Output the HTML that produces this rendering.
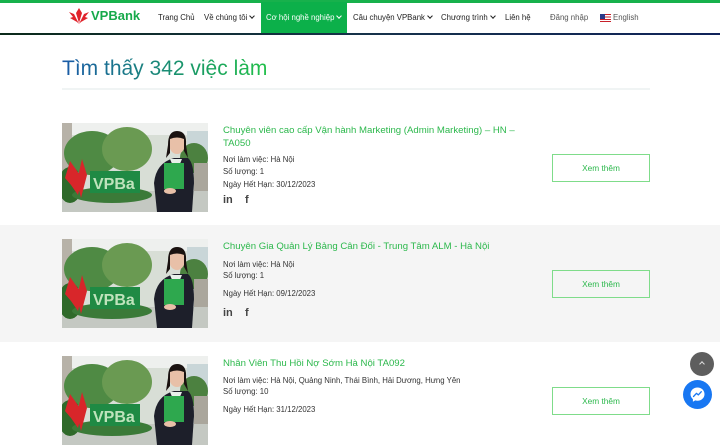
<!DOCTYPE html>
<html><head><meta charset="utf-8"><style>
*{margin:0;padding:0;box-sizing:border-box}
body{width:720px;height:420px;overflow:hidden;background:#fff;font-family:"Liberation Sans",sans-serif;position:relative}
.a{position:absolute;white-space:nowrap}
.nav{font-size:7.8px;color:#222;top:13px}
.chev{display:inline-block;width:4px;height:4px;border-right:1.4px solid currentColor;border-bottom:1.4px solid currentColor;transform:rotate(45deg);margin-left:3px;position:relative;top:-2px}
.t{color:#2cb84c;font-size:9.6px}
.d{color:#333;font-size:7.8px}
.btn{position:absolute;left:552px;width:98px;height:28px;border:1px solid #7fdc8a;color:#2cb84c;font-size:8.3px;text-align:center;line-height:26px}
.ic{font-weight:bold;color:#444;font-size:11px}
</style></head><body>
<div class="a" style="left:0;top:0;width:720px;height:3px;background:#17b14c"></div>
<div class="a" style="left:0;top:33px;width:720px;height:2px;background:linear-gradient(90deg,#0b2a1a,#16324a 50%,#10235a)"></div>
<div class="a" style="left:261px;top:2px;width:86px;height:31px;background:#0cb04a"></div>
<svg class="a" style="left:68px;top:8px" width="22" height="16" viewBox="0 0 22 16"><path d="M11 16 L6 6 L1 4 L5 9 L2 10 L9 14Z M11 16 L16 6 L21 4 L17 9 L20 10 L13 14Z M11 15 L8 5 L11 0 L14 5Z" fill="#e0222a"/></svg>
<div class="a" style="left:91px;top:8px;font-size:13px;font-weight:bold;color:#16a94a">VPBank</div>
<div class="a nav" style="left:158px">Trang Chủ</div>
<div class="a nav" style="left:204px">Về chúng tôi<span class="chev"></span></div>
<div class="a nav" style="left:266px;color:#fff">Cơ hội nghề nghiệp<span class="chev"></span></div>
<div class="a nav" style="left:353px">Câu chuyện VPBank<span class="chev"></span></div>
<div class="a nav" style="left:441px">Chương trình<span class="chev"></span></div>
<div class="a nav" style="left:505px">Liên hệ</div>
<div class="a nav" style="left:550px;color:#555">Đăng nhập</div>
<div class="a" style="left:600px;top:14px;width:11px;height:8px;background:repeating-linear-gradient(#c8202a 0 1.2px,#fff 1.2px 2.4px)"><div style="width:5px;height:4.5px;background:#2a3a8a"></div></div>
<div class="a nav" style="left:613px;color:#555">English</div>

<div class="a" style="left:62px;top:57px;font-size:21px;background:linear-gradient(90deg,#1a5aa8,#1aa060 70%,#22c04a);-webkit-background-clip:text;color:transparent">Tìm thấy 342 việc làm</div>
<div class="a" style="left:62px;top:88px;width:588px;height:2px;background:#f0f4f4"></div>

<div class="a" style="left:0;top:225px;width:720px;height:117px;background:#f5f5f5"></div>

<svg width="0" height="0" style="position:absolute"><defs><g id="img">
<rect width="146" height="89" fill="#d8ded6"/>
<rect x="0" y="0" width="146" height="12" fill="#eef0ee"/>
<rect x="0" y="0" width="10" height="60" fill="#b7b2a8"/>
<rect x="125" y="8" width="21" height="30" fill="#c9d6d8"/>
<ellipse cx="30" cy="30" rx="28" ry="22" fill="#4f8a44"/>
<ellipse cx="65" cy="26" rx="25" ry="22" fill="#6a9a52"/>
<ellipse cx="132" cy="35" rx="14" ry="15" fill="#4c8140"/>
<rect x="0" y="68" width="146" height="21" fill="#c4c8c2"/>
<ellipse cx="8" cy="62" rx="12" ry="18" fill="#2f6a2a"/>
<ellipse cx="50" cy="72" rx="40" ry="8" fill="#3b7a38"/>
<path d="M8 38 L20 55 L16 72 L9 62 L3 55Z M20 36 L25 52 L19 75 L15 58Z" fill="#d8262a"/>
<rect x="28" y="48" width="50" height="22" fill="#1f8a44"/>
<text x="31" y="66" font-size="16" font-weight="bold" fill="#bfe3bc" font-family="Liberation Sans">VPBa</text>
<rect x="132" y="40" width="14" height="28" fill="#aaa69c"/>
<path d="M95 89 L92 60 Q94 40 112 35 L126 35 Q132 40 132 60 L130 89Z" fill="#1d1f2a"/>
<path d="M108 36 L114 50 L120 36Z" fill="#e8f0ea"/>
<ellipse cx="115" cy="21" rx="8" ry="10" fill="#e8c0a8"/>
<path d="M106 22 Q106 8 115 8 Q125 8 124 22 L126 35 L122 28 L122 16 Q115 13 108 16 L108 30 L104 35Z" fill="#1a1210"/>
<rect x="102" y="40" width="20" height="26" fill="#2ea84e"/>
<ellipse cx="108" cy="68" rx="6" ry="3" fill="#e8c0a8"/>
</g></defs></svg>
<svg class="a" style="left:62px;top:123px" width="146" height="89"><use href="#img"/></svg>
<svg class="a" style="left:62px;top:239px" width="146" height="89"><use href="#img"/></svg>
<svg class="a" style="left:62px;top:356px" width="146" height="89"><use href="#img"/></svg>

<div class="a t" style="left:223px;top:125px">Chuyên viên cao cấp Vận hành Marketing (Admin Marketing) – HN –</div>
<div class="a t" style="left:223px;top:138px">TA050</div>
<div class="a d" style="left:223px;top:155px">Nơi làm việc: Hà Nội</div>
<div class="a d" style="left:223px;top:167px">Số lượng: 1</div>
<div class="a d" style="left:223px;top:180px">Ngày Hết Hạn: 30/12/2023</div>
<div class="a ic" style="left:223px;top:194px">in</div><div class="a ic" style="left:245px;top:194px">f</div>
<div class="btn" style="top:154px">Xem thêm</div>

<div class="a t" style="left:223px;top:241px">Chuyên Gia Quản Lý Bảng Cân Đối - Trung Tâm ALM - Hà Nội</div>
<div class="a d" style="left:223px;top:260px">Nơi làm việc: Hà Nội</div>
<div class="a d" style="left:223px;top:271px">Số lượng: 1</div>
<div class="a d" style="left:223px;top:289px">Ngày Hết Hạn: 09/12/2023</div>
<div class="a ic" style="left:223px;top:307px">in</div><div class="a ic" style="left:245px;top:307px">f</div>
<div class="btn" style="top:270px">Xem thêm</div>

<div class="a t" style="left:223px;top:358px">Nhân Viên Thu Hồi Nợ Sớm Hà Nội TA092</div>
<div class="a d" style="left:223px;top:376px">Nơi làm việc: Hà Nội, Quảng Ninh, Thái Bình, Hải Dương, Hưng Yên</div>
<div class="a d" style="left:223px;top:387px">Số lượng: 10</div>
<div class="a d" style="left:223px;top:405px">Ngày Hết Hạn: 31/12/2023</div>
<div class="btn" style="top:387px">Xem thêm</div>

<div class="a" style="left:690px;top:352px;width:24px;height:24px;border-radius:50%;background:#5e5e5e"><div style="position:absolute;left:10px;top:10px;width:4px;height:4px;border-left:1.3px solid #ddd;border-top:1.3px solid #ddd;transform:rotate(45deg)"></div></div>
<div class="a" style="left:683px;top:380px;width:29px;height:29px;border-radius:50%;background:#1877f2">
<svg width="29" height="29" viewBox="0 0 29 29"><path d="M14.5 7.5c-4 0-7 2.9-7 6.6 0 2 .9 3.8 2.4 5v2.6l2.3-1.3c.7.2 1.5.3 2.3.3 4 0 7-2.9 7-6.6s-3-6.6-7-6.6z" fill="#fff"/><path d="M10.5 16.5l3-3.2 1.8 1.6 3-3.2-3 3.2-1.8-1.6z" stroke="#1877f2" stroke-width="1.3" fill="none" stroke-linejoin="round"/></svg></div>
</body></html>
